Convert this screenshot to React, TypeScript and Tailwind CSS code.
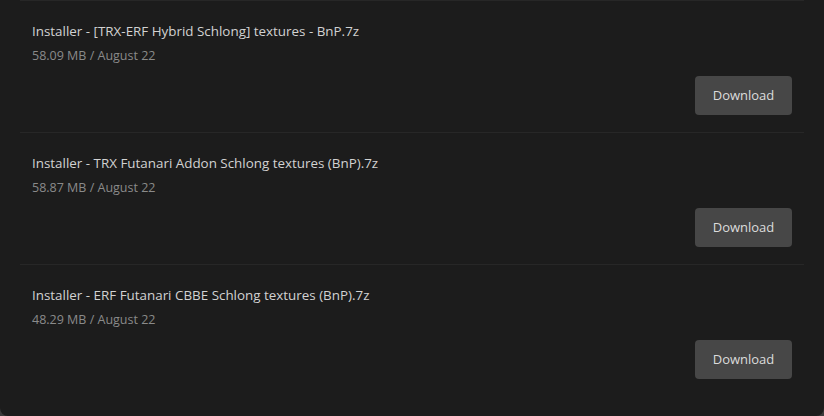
const files = [
  { name: "Installer - [TRX-ERF Hybrid Schlong] textures - BnP.7z", size: "58.09 MB", date: "August 22" },
  { name: "Installer - TRX Futanari Addon Schlong textures (BnP).7z", size: "58.87 MB", date: "August 22" },
  { name: "Installer - ERF Futanari CBBE Schlong textures (BnP).7z", size: "48.29 MB", date: "August 22" },
];

export default function App() {
  return (
    <div className="h-[416px] w-[824px] bg-[#3a3a3a]" style={{ fontFamily: '"Open Sans", "Noto Sans", sans-serif' }}>
      <div className="flex h-full flex-col rounded-b-lg bg-[#1c1c1c]">
        {files.map((f) => (
          <div key={f.name} className="mx-5 flex h-[132px] flex-col border-t border-[#272727] px-3 pt-[20px]">
            <div className="text-[13.4px] leading-[20px] text-[#d2d2d2]">{f.name}</div>
            <div className="mt-[5px] text-[12.5px] leading-[20px] text-[#8a8a8a]">
              {f.size} / {f.date}
            </div>
            <div className="mt-[10px] flex justify-end">
              <button className="h-[39px] w-[97px] rounded-[4px] bg-[#474747] text-[13px] text-[#dcdcdc]">
                Download
              </button>
            </div>
          </div>
        ))}
      </div>
    </div>
  );
}
